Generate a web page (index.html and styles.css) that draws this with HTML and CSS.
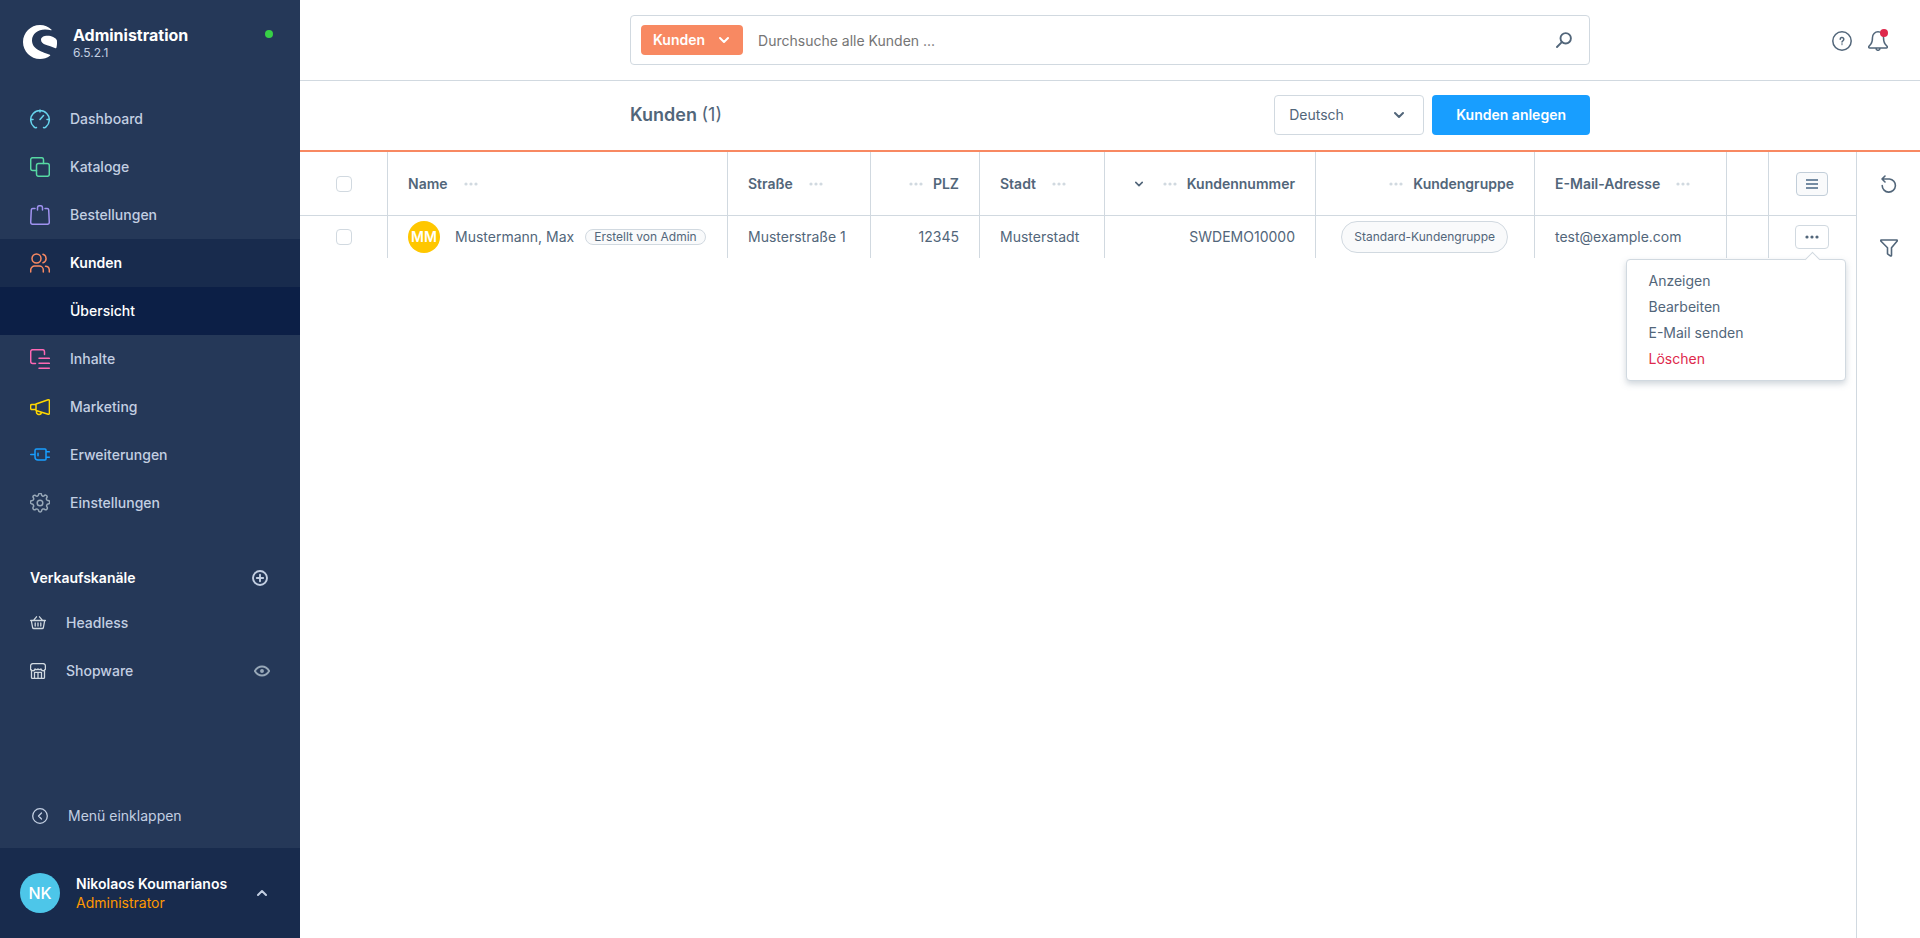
FILE: index.html
```html
<!DOCTYPE html>
<html lang="de">
<head>
<meta charset="utf-8">
<title>Kunden | Shopware Administration</title>
<link rel="stylesheet" href="styles.css">
</head>
<body>
<div class="app">
  <aside class="sidebar">
    <header class="brand">
      <svg class="brand-logo" viewBox="0 0 34 34" aria-hidden="true"><path fill="#fff" d="M28.600 4.800C25.500 1.800 21.500 0 17 0 7.600 0 0 7.600 0 17s7.600 17 17 17c3.700 0 7.100-1.200 10-3.300.4-.3.300-.8-.1-1C20 27.200 9 24.500 9 15.500 9 9 15 4.600 22 4.600c2.200 0 4.200.2 6 .6.6.1.9 0 .6-.4z"/><path fill="#fff" d="M33.800 15c-1.300-2.400-5.200-4.300-9.300-4.300-3.800 0-6.500 1.500-6.500 4 0 5.200 7.800 5.400 14.500 8.500.5.200.8 0 .9-.4.500-2 .9-4.800.4-7.800z"/></svg>
      <div class="brand-text">
        <div class="brand-title">Administration</div>
        <div class="brand-version">6.5.2.1</div>
      </div>
      <span class="status-dot"></span>
    </header>

    <nav class="main-nav">
      <a class="nav-item" href="#"><svg class="icon c-cyan" viewBox="0 0 20 20"><path d="M6.500 18.500c-1 .4-1.800.1-2.500-.6A9.300 9.300 0 1 1 16 17.900c-.7.700-1.500 1-2.500.6M10 1v2M1 10.500h2M17 10.500h2M10 10.500L13.500 6.500"/></svg>Dashboard</a>
      <a class="nav-item" href="#"><svg class="icon c-green" viewBox="0 0 20 20"><path d="M6.500 13.500H2.700a2 2 0 0 1-2-2V2.700a2 2 0 0 1 2-2h8.800a2 2 0 0 1 2 2v3.800"/><rect x="6.500" y="6.500" width="12.800" height="12.800" rx="2"/></svg>Kataloge</a>
      <a class="nav-item" href="#"><svg class="icon c-violet" viewBox="0 0 20 20"><path d="M5 3.500H2.800a1.500 1.500 0 0 0-1.500 1.400L.7 17.300a2 2 0 0 0 2 2h14.600a2 2 0 0 0 2-2l-.6-12.400a1.500 1.500 0 0 0-1.500-1.400H15M7.500 5V2.700a2 2 0 0 1 2-2h1a2 2 0 0 1 2 2V5"/></svg>Bestellungen</a>
      <a class="nav-item is-active" href="#"><svg class="icon c-coral" viewBox="0 0 20 20"><circle cx="6.500" cy="5.500" r="4.500"/><path d="M.7 19v-2a4 4 0 0 1 4-4h4.600a4 4 0 0 1 4 4v2M13 1.300a4.400 4.400 0 0 1 0 8.400M15.500 13.200a4 4 0 0 1 3.800 3.800v2"/></svg>Kunden</a>
      <a class="nav-item is-sub" href="#">Übersicht</a>
      <a class="nav-item" href="#"><svg class="icon c-pink" viewBox="0 0 20 20"><path d="M5.500 14.500H2.700a2 2 0 0 1-2-2V2.700a2 2 0 0 1 2-2h9.800a2 2 0 0 1 2 2v2.800M9 9.300h10.300M9 14.300h10.300M9 19.200h10.300"/></svg>Inhalte</a>
      <a class="nav-item" href="#"><svg class="icon c-yellow" viewBox="0 0 20 20"><path d="M6 7L18.200 2.800a.9.900 0 0 1 1.200.9v12.600a.9.900 0 0 1-1.200.9L6 13.500zM6 7.500H1.800a1.200 1.200 0 0 0-1.200 1.200v2.600a1.200 1.200 0 0 0 1.200 1.200H6M6.500 13.700v1.500a2.300 2.300 0 0 0 2.300 2.300h.4a2.300 2.300 0 0 0 2.200-2.200"/></svg>Marketing</a>
      <a class="nav-item" href="#"><svg class="icon c-blue" viewBox="0 0 20 20"><path d="M5 5.500a1.500 1.500 0 0 1 1.500-1.500H15a1 1 0 0 1 1 1v9a1 1 0 0 1-1 1H8a3 3 0 0 1-3-3zM.7 9.500H5M8 8.300v2.400M16 6.800h3.300M16 12.200h3.300"/></svg>Erweiterungen</a>
      <a class="nav-item" href="#"><svg class="icon c-grey" viewBox="0 0 20 20"><path d="M8.500 1.800a1.500 1.500 0 0 1 3 0c.2 1.200 1.600 1.700 2.600 1a1.500 1.500 0 0 1 2.600 2c-.7 1-.1 2.400 1.100 2.700a1.500 1.500 0 0 1 .2 3.600c-1.300.3-1.800 1.700-1.100 2.700a1.600 1.600 0 0 1-2.400 2.400c-1-.6-2.500-.1-2.800 1.100a1.500 1.500 0 0 1-3.200 0c-.3-1.200-1.700-1.700-2.700-1.100a1.600 1.600 0 0 1-2.400-2.400c.6-1 .1-2.400-1.200-2.700a1.500 1.500 0 0 1 .1-3.600c1.300-.3 1.800-1.700 1.100-2.700a1.500 1.500 0 0 1 2.500-2c1 .7 2.400.2 2.600-1z"/><circle cx="10" cy="10" r="2.800"/></svg>Einstellungen</a>
    </nav>

    <section class="channels">
      <div class="channels-head">
        <h2 class="channels-title">Verkaufskanäle</h2>
        <button class="plain-button" type="button" aria-label="Verkaufskanal hinzufügen"><svg class="icon-16 s-bold" viewBox="0 0 16 16"><circle cx="8" cy="8" r="7"/><path d="M8 4.800v6.400M4.800 8h6.400"/></svg></button>
      </div>
      <a class="channel" href="#"><svg class="icon-16 c-light" viewBox="0 0 16 16"><path d="M.6 5.500h14.800M1.300 5.500l1.300 7a1.300 1.300 0 0 0 1.300 1h8.200a1.300 1.300 0 0 0 1.300-1l1.300-7M3.500 5.300L6.500 1.800M12.500 5.300L9.500 1.800M5.200 8v3M8 8v3M10.800 8v3"/></svg><span class="channel-name">Headless</span></a>
      <a class="channel" href="#"><svg class="icon-16 c-light" viewBox="0 0 16 16"><path d="M1.500 7v7.400a1 1 0 0 0 1 1h11a1 1 0 0 0 1-1V7M.6 5V3A2.400 2.400 0 0 1 3 .6h10A2.400 2.400 0 0 1 15.400 3v2a2 2 0 0 1-4.400 1 2 2 0 0 1-3 0 2 2 0 0 1-3 0A2 2 0 0 1 .6 5M4.500 15.400v-6h7v6M8 9.400v6"/></svg><span class="channel-name">Shopware</span><svg class="icon-16 s-bold c-grey" viewBox="0 0 16 16"><path d="M.8 8C4.500 2 11.500 2 15.200 8 11.500 14 4.500 14 .8 8z"/><circle cx="8" cy="8" r="1"/></svg></a>
    </section>

    <div class="sidebar-bottom">
      <button class="collapse" type="button"><svg class="icon-16" viewBox="0 0 16 16"><circle cx="8" cy="8" r="7.300"/><path d="M9.500 5L6.500 8l3 3"/></svg>Menü einklappen</button>
      <button class="user" type="button">
        <span class="user-avatar">NK</span>
        <span class="user-text"><span class="user-name">Nikolaos Koumarianos</span><span class="user-role">Administrator</span></span>
        <svg class="chevron" viewBox="0 0 10 10"><path d="M1 7l4-4 4 4"/></svg>
      </button>
    </div>
  </aside>

  <div class="content">
    <header class="topbar">
      <form class="search">
        <button class="search-type" type="button">Kunden<svg class="chevron" viewBox="0 0 10 10"><path d="M1 3l4 4 4-4"/></svg></button>
        <input class="search-input" type="text" placeholder="Durchsuche alle Kunden ..." aria-label="Suche">
        <button class="plain-button search-go" type="button" aria-label="Suchen"><svg class="icon-16 s-bold" viewBox="0 0 16 16"><circle cx="9.700" cy="6.300" r="5.200"/><path d="M5.800 10.200L1 15"/></svg></button>
      </form>
      <div class="top-actions">
        <button class="plain-button" type="button" aria-label="Hilfe"><svg class="icon" viewBox="0 0 20 20"><circle cx="10" cy="10" r="9.200"/><path d="M8.200 8.300a1.800 1.800 0 1 1 2.700 1.500c-.6.400-.9.700-.9 1.300"/><circle cx="10" cy="13.300" r=".2"/></svg></button>
        <button class="plain-button bell" type="button" aria-label="Benachrichtigungen"><svg class="icon" viewBox="0 0 20 20"><path d="M10 .8A5.500 5.500 0 0 0 4.500 6.300c0 3.200-.3 5.200-1.600 6.700L1 15.200c-.7.900-.2 1.800.7 1.800h16.600c.9 0 1.400-.9.700-1.800L17.100 13c-1.300-1.500-1.600-3.500-1.600-6.700A5.500 5.500 0 0 0 10 .8zM8 17.300a2 2 0 0 0 4 0"/></svg><span class="bell-dot"></span></button>
      </div>
    </header>

    <div class="pagebar">
      <div class="pagebar-inner">
        <h1 class="page-title">Kunden <span class="page-count">(1)</span></h1>
        <div class="page-actions">
          <div class="language">
            <select class="language-select" aria-label="Sprache"><option>Deutsch</option></select>
            <svg class="chevron language-chevron" viewBox="0 0 10 10"><path d="M1 3l4 4 4-4"/></svg>
          </div>
          <button class="primary" type="button">Kunden anlegen</button>
        </div>
      </div>
    </div>

    <div class="body">
      <div class="grid-area">
        <table class="grid">
          <colgroup><col class="w-check"><col class="w-name"><col class="w-street"><col class="w-zip"><col class="w-city"><col class="w-number"><col class="w-group"><col class="w-mail"><col><col class="w-actions"></colgroup>
          <thead>
            <tr>
              <th class="check"><input class="box" type="checkbox" aria-label="Alle auswählen"></th>
              <th><div class="head">Name<svg class="dots" viewBox="0 0 14 4"><circle cx="2" cy="2" r="1.600"/><circle cx="7" cy="2" r="1.600"/><circle cx="12" cy="2" r="1.600"/></svg></div></th>
              <th><div class="head">Straße<svg class="dots" viewBox="0 0 14 4"><circle cx="2" cy="2" r="1.600"/><circle cx="7" cy="2" r="1.600"/><circle cx="12" cy="2" r="1.600"/></svg></div></th>
              <th><div class="head head-right"><svg class="dots" viewBox="0 0 14 4"><circle cx="2" cy="2" r="1.600"/><circle cx="7" cy="2" r="1.600"/><circle cx="12" cy="2" r="1.600"/></svg>PLZ</div></th>
              <th><div class="head">Stadt<svg class="dots" viewBox="0 0 14 4"><circle cx="2" cy="2" r="1.600"/><circle cx="7" cy="2" r="1.600"/><circle cx="12" cy="2" r="1.600"/></svg></div></th>
              <th><div class="head head-right"><svg class="chevron sort" viewBox="0 0 10 10"><path d="M1 3l4 4 4-4"/></svg><svg class="dots" viewBox="0 0 14 4"><circle cx="2" cy="2" r="1.600"/><circle cx="7" cy="2" r="1.600"/><circle cx="12" cy="2" r="1.600"/></svg>Kundennummer</div></th>
              <th><div class="head head-right"><svg class="dots" viewBox="0 0 14 4"><circle cx="2" cy="2" r="1.600"/><circle cx="7" cy="2" r="1.600"/><circle cx="12" cy="2" r="1.600"/></svg>Kundengruppe</div></th>
              <th><div class="head">E-Mail-Adresse<svg class="dots" viewBox="0 0 14 4"><circle cx="2" cy="2" r="1.600"/><circle cx="7" cy="2" r="1.600"/><circle cx="12" cy="2" r="1.600"/></svg></div></th>
              <th></th>
              <th class="actions"><button class="settings-button" type="button" aria-label="Spalten"><svg class="burger" viewBox="0 0 12 12"><path d="M0 2h12M0 6h12M0 10h12"/></svg></button></th>
            </tr>
          </thead>
          <tbody>
            <tr>
              <td class="check"><input class="box" type="checkbox" aria-label="Mustermann, Max auswählen"></td>
              <td><div class="customer"><span class="avatar">MM</span><a class="customer-name" href="#">Mustermann, Max</a><span class="tag">Erstellt von Admin</span></div></td>
              <td>Musterstraße 1</td>
              <td class="right">12345</td>
              <td>Musterstadt</td>
              <td class="right">SWDEMO10000</td>
              <td class="right"><span class="pill">Standard-Kundengruppe</span></td>
              <td>test@example.com</td>
              <td></td>
              <td class="actions">
                <div class="context">
                  <button class="context-button" type="button" aria-label="Aktionen"><svg class="dots" viewBox="0 0 14 4"><circle cx="2" cy="2" r="1.600"/><circle cx="7" cy="2" r="1.600"/><circle cx="12" cy="2" r="1.600"/></svg></button>
                  <div class="menu">
                    <button class="menu-item" type="button">Anzeigen</button>
                    <button class="menu-item" type="button">Bearbeiten</button>
                    <button class="menu-item" type="button">E-Mail senden</button>
                    <button class="menu-item is-danger" type="button">Löschen</button>
                  </div>
                </div>
              </td>
            </tr>
          </tbody>
        </table>
      </div>
      <aside class="tools">
        <button class="plain-button" type="button" aria-label="Aktualisieren"><svg class="icon-18" viewBox="0 0 18 18"><path d="M5 1L2 4l3 3M2 4h7.500a6.600 6.600 0 1 1-7.300 6.600"/></svg></button>
        <button class="plain-button" type="button" aria-label="Filter"><svg class="icon-18" viewBox="0 0 18 18"><path d="M1.200 1h15.600c.6 0 .8.600.4 1l-5.700 6.800v7.400c0 .8-.7 1-1.200.6l-2.800-2V8.800L.8 2C.4 1.600.6 1 1.200 1z"/></svg></button>
      </aside>
    </div>
  </div>
</div>
</body>
</html>
```

FILE: styles.css
```css
* { box-sizing: border-box; }

body {
  margin: 0;
  font-family: Inter, "Liberation Sans", sans-serif;
  font-size: 14px;
  line-height: 20px;
  color: #52667a;
  background: #fff;
}

button, input, select { font: inherit; color: inherit; }
button { cursor: pointer; }
a { color: inherit; text-decoration: none; }
svg { display: block; flex: none; fill: none; stroke: currentColor; stroke-linecap: round; stroke-linejoin: round; }

.icon { width: 20px; height: 20px; stroke-width: 1.500; }
.icon-18 { width: 18px; height: 18px; stroke-width: 1.600; }
.icon-16 { width: 16px; height: 16px; stroke-width: 1.300; }
.s-bold { stroke-width: 1.900; }
.chevron { width: 10px; height: 10px; stroke-width: 2; }
.dots { width: 14px; height: 4px; fill: currentColor; stroke: none; }

.c-cyan { color: #67d3ec; }
.c-green { color: #57d9a3; }
.c-violet { color: #a092f0; }
.c-coral { color: #f88962; }
.c-pink { color: #ff68b4; }
.c-yellow { color: #ffd700; }
.c-blue { color: #189eff; }
.c-grey { color: #98a8b8; }
.c-light { color: #d1d9e0; }

.plain-button { display: flex; position: relative; padding: 0; border: 0; background: none; }

.app { display: flex; min-height: 100vh; }

/* Sidebar */
.sidebar { display: flex; flex-direction: column; flex: none; width: 300px; background: #253858; color: #c3cfe2; font-weight: 500; }
.brand { display: flex; align-items: flex-start; padding: 25px 27px 0 23px; height: 95px; }
.brand-logo { width: 34px; height: 34px; stroke: none; }
.brand-text { flex: 1; margin-left: 16px; }
.brand-title { font-size: 16px; font-weight: 700; color: #fff; }
.brand-version { font-size: 12px; line-height: 16px; font-weight: 400; }
.status-dot { width: 8px; height: 8px; margin-top: 5px; border-radius: 50%; background: #37d046; }

.nav-item { display: flex; align-items: center; gap: 20px; height: 48px; padding: 0 30px; }
.nav-item.is-active { background: #182b4d; color: #fff; font-weight: 600; }
.nav-item.is-sub { padding-left: 70px; background: #0c1f46; color: #fff; }

.channels { margin-top: 26px; }
.channels-head { display: flex; align-items: center; justify-content: space-between; padding: 15px 32px 11px 30px; }
.channels-title { margin: 0; font-size: 14px; line-height: 20px; font-weight: 600; color: #fff; }
.channel { display: flex; align-items: center; height: 48px; padding: 0 30px; }
.channel-name { flex: 1; margin-left: 20px; }

.sidebar-bottom { margin-top: auto; }
.collapse { display: flex; align-items: center; gap: 20px; width: 100%; height: 64px; padding: 0 32px; border: 0; background: none; font-weight: 400; }
.user { display: flex; align-items: center; width: 100%; height: 90px; padding: 0 33px 0 20px; border: 0; background: #182b4d; text-align: left; }
.user-avatar { display: grid; flex: none; place-items: center; width: 40px; height: 40px; border-radius: 50%; background: #4dc6e9; color: #fff; font-size: 16px; }
.user-text { display: flex; flex: 1; flex-direction: column; margin-left: 16px; line-height: 19px; }
.user-name { font-weight: 600; color: #fff; }
.user-role { font-weight: 400; color: #ff9800; }

/* Header */
.content { display: flex; flex: 1; flex-direction: column; min-width: 0; }
.topbar { display: grid; grid-template-columns: 1fr minmax(0, 960px) 1fr; align-items: center; height: 81px; border-bottom: 1px solid #d1d9e0; }
.search { display: flex; grid-column: 2; align-items: center; height: 50px; padding: 0 17px 0 10px; border: 1px solid #d1d9e0; border-radius: 4px; }
.search-type { display: flex; align-items: center; gap: 14px; height: 30px; padding: 0 14px 0 12px; border: 0; border-radius: 4px; background: #f88962; color: #fff; font-weight: 600; }
.search-input { flex: 1; padding: 2px 15px 0; border: 0; outline: 0; background: none; }
.search-input::placeholder { color: #757575; opacity: 1; }
.top-actions { display: flex; justify-content: flex-end; gap: 16px; padding: 2px 32px 0 0; }
.bell-dot { position: absolute; top: -2px; right: 0; width: 8px; height: 8px; border-radius: 50%; background: #de294c; }

.pagebar { display: flex; justify-content: center; align-items: center; height: 71px; padding-bottom: 1px; border-bottom: 2px solid #f88962; }
.pagebar-inner { display: flex; align-items: center; justify-content: space-between; width: 960px; }
.page-title { margin: 0; font-size: 18px; line-height: 26px; font-weight: 600; }
.page-count { font-weight: 400; }
.page-actions { display: flex; gap: 8px; }
.language { position: relative; width: 150px; }
.language-select { appearance: none; width: 100%; height: 40px; padding: 0 14px; border: 1px solid #d1d9e0; border-radius: 4px; background: #fff; }
.language-chevron { position: absolute; top: 15px; right: 20px; pointer-events: none; }
.primary { height: 40px; padding: 0 24px; border: 0; border-radius: 4px; background: #189eff; color: #fff; font-weight: 600; }

/* Grid */
.body { display: flex; flex: 1; }
.grid-area { flex: 1; min-width: 0; }
.grid { width: 100%; table-layout: fixed; border-spacing: 0; white-space: nowrap; }
.grid th, .grid td { padding: 0 20px; border-right: 1px solid #d1d9e0; text-align: left; }
.grid th { height: 64px; border-bottom: 1px solid #d1d9e0; font-weight: 600; }
.grid td { height: 42px; }
.grid th:last-child, .grid td:last-child { border-right: 0; }
.grid td.right { text-align: right; }
.grid .check { padding: 0; }
.grid .actions { padding: 0 2px 0 0; }
.w-check { width: 88px; }
.w-name { width: 340px; }
.w-street { width: 143px; }
.w-zip { width: 109px; }
.w-city { width: 125px; }
.w-number { width: 211px; }
.w-group { width: 219px; }
.w-mail { width: 192px; }
.w-actions { width: 87px; }

.head { display: flex; align-items: center; gap: 16px; }
.head .dots { color: #d1d9e0; }
.head-right { justify-content: flex-end; gap: 10px; }
.sort { width: 8px; height: 8px; margin-right: 10px; }

.box { display: block; appearance: none; width: 16px; height: 16px; margin: 0 auto; border: 1px solid #d1d9e0; border-radius: 4px; background: #fff; }
.customer { display: flex; align-items: center; }
.avatar { display: grid; flex: none; place-items: center; width: 32px; height: 32px; border-radius: 50%; background: #ffc700; color: #fff; font-weight: 600; }
.customer-name { margin: 0 11px 0 15px; }
.tag { padding: 0 8px; border: 1px solid #d1d9e0; border-radius: 8px; background: #f9fafb; font-size: 12px; line-height: 14px; }
.pill { display: inline-block; padding: 0 12px; margin-right: 6px; border: 1px solid #d1d9e0; border-radius: 16px; background: #f9fafb; font-size: 12px; line-height: 30px; vertical-align: middle; }

.settings-button, .context-button { display: grid; place-items: center; height: 24px; margin: 0 auto; padding: 0; border: 1px solid #d1d9e0; border-radius: 4px; background: #fff; }
.settings-button { width: 32px; border-color: #c2ced9; background: #f9fafb; }
.context-button { width: 34px; }
.burger { width: 12px; height: 12px; stroke: #758ca3; stroke-width: 2; stroke-linecap: butt; }

.context { position: relative; width: 34px; margin: 0 auto; }
.menu { position: absolute; top: 34px; right: -17px; width: 220px; padding: 8px 0; border: 1px solid #d1d9e0; border-radius: 4px; background: #fff; box-shadow: 0 3px 6px rgba(120, 138, 155, 0.350); }
.menu::before { content: ""; position: absolute; top: -6px; right: 27px; width: 10px; height: 10px; border: 1px solid #d1d9e0; border-width: 1px 0 0 1px; background: #fff; transform: rotate(45deg); }
.menu-item { display: block; width: 100%; padding: 3px 22px; border: 0; background: none; text-align: left; }
.menu-item.is-danger { color: #de294c; }

.tools { display: flex; flex-direction: column; align-items: center; flex: none; gap: 46px; width: 64px; padding-top: 23px; border-left: 1px solid #d1d9e0; }
```
